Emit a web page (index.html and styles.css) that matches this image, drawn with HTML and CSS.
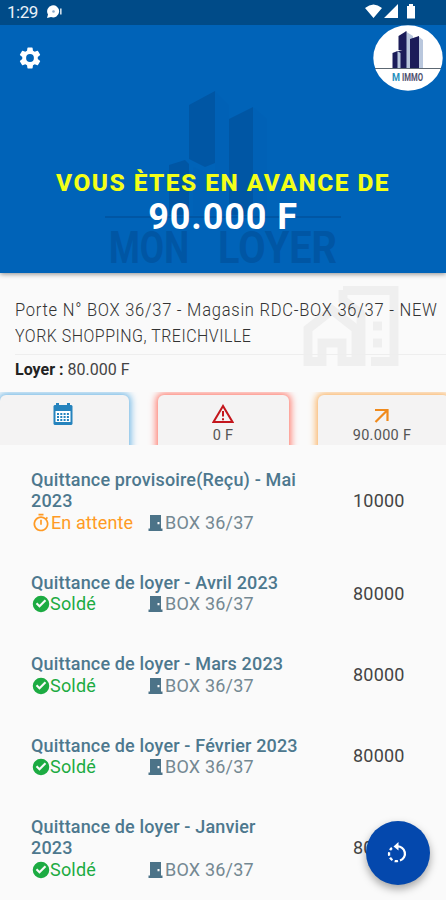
FILE: index.html
```html
<!DOCTYPE html>
<html lang="fr">
<head>
<meta charset="utf-8">
<title>Mon Loyer</title>
<link rel="stylesheet" href="styles.css">
</head>
<body>
<svg class="defs" width="0" height="0">
  <symbol id="check" viewBox="0 0 24 24"><path fill="currentColor" d="M12 1a11 11 0 1 0 0 22 11 11 0 0 0 0-22zm-2 16-5-5 2-2 3 3 7-7 2 2z"/></symbol>
  <symbol id="door" viewBox="0 0 15 16"><path fill="currentColor" fill-rule="evenodd" d="M2 0h11v13.500h1.500V16H.500v-2.500H2zM9.500 7v2.200h2V7z"/></symbol>
  <symbol id="timer" viewBox="0 0 24 24"><path fill="currentColor" d="M15 1H9v2h6zm-4 13h2V8h-2zm8-6.600 1.400-1.400-1.400-1.400L17.600 6A9 9 0 1 0 19 7.400zM12 20a7 7 0 1 1 0-14 7 7 0 0 1 0 14z"/></symbol>
</svg>
<div class="screen">
  <header class="hero">
    <div class="status">
      <span class="time">1:29</span>
      <svg class="notif" width="17" height="14" viewBox="0 0 17 14"><path d="M1 13 2 9.500A6 6 0 1 1 5 12zM14.200 3.500h1.300v6h-1.300z" fill="#fff"/><circle cx="7.500" cy="6.500" r="1.300" fill="#8faccb"/></svg>
      <svg class="signals" width="52" height="16" viewBox="0 0 52 16" fill="#fff"><path d="M0 4Q8.500-3 17 4L8.500 14zM33 0v14H19zM42 2h2V0h4v2h2v12.500h-8z"/></svg>
    </div>
    <svg class="gear" width="26" height="26" viewBox="0 0 24 24"><path fill="#fff" d="M19.140 12.940c.04-.3.060-.610.060-.940s-.020-.640-.070-.940l2.030-1.580a.49.49 0 0 0 .12-.610l-1.920-3.320a.49.49 0 0 0-.590-.220l-2.390.960a7 7 0 0 0-1.620-.940l-.360-2.540a.48.48 0 0 0-.480-.410h-3.840a.47.47 0 0 0-.470.410l-.360 2.540c-.590.240-1.130.570-1.620.940l-2.390-.960a.48.48 0 0 0-.590.220L2.740 8.870a.47.47 0 0 0 .12.610l2.030 1.580a6 6 0 0 0 0 1.880l-2.030 1.580a.49.49 0 0 0-.12.610l1.920 3.320c.12.220.37.290.590.220l2.390-.960c.5.380 1.030.700 1.620.940l.360 2.540c.050.240.240.410.480.410h3.840c.240 0 .440-.170.470-.410l.360-2.540a7 7 0 0 0 1.620-.940l2.390.960c.220.080.470 0 .590-.220l1.920-3.320a.47.47 0 0 0-.12-.610zM12 15.600a3.600 3.600 0 1 1 0-7.200 3.600 3.600 0 0 1 0 7.200z"/></svg>
    <svg class="logo" width="70" height="66" viewBox="0 0 70 66">
      <ellipse cx="35" cy="33" rx="34.700" ry="32.700" fill="#fff"/>
      <path d="M32 6l8 5v32h-8zM45 11l5 4v28h-5z" fill="#b9c7dd"/>
      <path d="M25.500 11l8-5v37h-4V26l-4-1zM37 14l9-3v32h-9zM19.500 28l5-2v17h-5zM24.500 26h5v17h-5z" fill="#1b1c59"/>
      <path d="M24.500 26l3 2v15h-3z" fill="#b9c7dd"/>
      <path d="M2 43.500h66" stroke="#5c6772"/>
      <text x="19" y="56" font-size="11.500" font-weight="700" textLength="8" lengthAdjust="spacingAndGlyphs" fill="#258fbd">M</text><text x="29" y="56" font-size="11.500" font-weight="700" textLength="21" lengthAdjust="spacingAndGlyphs" fill="#51516f">IMMO</text>
    </svg>
    <svg class="watermark" width="236" height="182" viewBox="0 0 236 182" fill="#0056a4">
      <path d="M84 14l26-14v72l-10 4-16-8zM124 28l24-12v108h-24zM64 74l16-5 4 4v51H64z"/>
      <path d="M88 76l22 9v39H88zM110 0l14 14v110h-14zM148 16l14 12v96h-14z" opacity=".1"/>
      <path d="M0 125h236v2H0z"/>
      <text x="4" y="172" font-size="45" font-weight="700" textLength="80" lengthAdjust="spacingAndGlyphs">MON</text>
      <text x="113" y="172" font-size="45" font-weight="700" textLength="119" lengthAdjust="spacingAndGlyphs">LOYER</text>
    </svg>
    <div class="lead">VOUS ÈTES EN AVANCE DE</div>
    <div class="sum">90.000 F</div>
  </header>

  <section class="info">
    <svg class="estate" width="96" height="80" viewBox="0 0 96 80" fill="none" stroke="#efefef" stroke-width="9">
      <path d="M40 4.500h51v71H68M40 4v10l18 14v52"/>
      <path d="M5 80V43l24-19 24 19v32.500H39V57H19v18.500H5"/>
      <path d="M70 40h9M70 57h9"/>
    </svg>
    <div class="address"><span class="l1">Porte N° BOX 36/37 - Magasin RDC-BOX 36/37 - NEW</span><span class="l2">YORK SHOPPING, TREICHVILLE</span></div>
    <div class="rent"><b>Loyer :</b> 80.000 F</div>
  </section>

  <nav class="tabs">
    <div class="tab blue">
      <svg width="20" height="22" viewBox="0 0 20 22"><path fill="#2583bd" d="M3 0h3v2h8V0h3v2h1.500l1 1v18l-1 1h-17l-1-1V3l1-1H3z"/><path fill="#fff" d="M2.500 8h15v11h-15z"/><path d="M4 11h12M4 14h12M4 17h12" stroke="#2583bd" stroke-width="1.800" stroke-dasharray="2 1.300"/></svg>
    </div>
    <div class="tab red">
      <svg width="22" height="20" viewBox="0 0 22 20"><path d="M11 2 1.500 18h19z" fill="none" stroke="#c4161c" stroke-width="2"/><path d="M11 7v5.500M11 14.200v2" stroke="#c4161c" stroke-width="2"/></svg>
      <span>0 F</span>
    </div>
    <div class="tab orange">
      <svg width="16" height="16" viewBox="0 0 16 16"><path d="M1 2h12.500v11M13 2.500 1.500 14" fill="none" stroke="#f08a1c" stroke-width="2.200"/></svg>
      <span>90.000 F</span>
    </div>
  </nav>

  <main class="list">
    <article class="item">
      <div><h2>Quittance provisoire(Reçu) - Mai<br>2023</h2>
      <div class="meta"><span class="state wait"><svg width="20" height="20"><use href="#timer"/></svg>En attente</span><span class="box"><svg width="15" height="16"><use href="#door"/></svg>BOX 36/37</span></div></div>
      <div class="amount">10000</div>
    </article>
    <article class="item">
      <div><h2>Quittance de loyer - Avril 2023</h2>
      <div class="meta"><span class="state"><svg width="18" height="18"><use href="#check"/></svg>Soldé</span><span class="box"><svg width="15" height="16"><use href="#door"/></svg>BOX 36/37</span></div></div>
      <div class="amount">80000</div>
    </article>
    <article class="item">
      <div><h2>Quittance de loyer - Mars 2023</h2>
      <div class="meta"><span class="state"><svg width="18" height="18"><use href="#check"/></svg>Soldé</span><span class="box"><svg width="15" height="16"><use href="#door"/></svg>BOX 36/37</span></div></div>
      <div class="amount">80000</div>
    </article>
    <article class="item">
      <div><h2>Quittance de loyer - Février 2023</h2>
      <div class="meta"><span class="state"><svg width="18" height="18"><use href="#check"/></svg>Soldé</span><span class="box"><svg width="15" height="16"><use href="#door"/></svg>BOX 36/37</span></div></div>
      <div class="amount">80000</div>
    </article>
    <article class="item">
      <div><h2>Quittance de loyer - Janvier<br>2023</h2>
      <div class="meta"><span class="state"><svg width="18" height="18"><use href="#check"/></svg>Soldé</span><span class="box"><svg width="15" height="16"><use href="#door"/></svg>BOX 36/37</span></div></div>
      <div class="amount">80000</div>
    </article>
  </main>
  <button class="fab" aria-label="Actualiser">
    <svg width="22" height="22" viewBox="0 0 22 22" fill="none" stroke="#fff" stroke-width="2.300"><path d="M10 4.500a7.200 7.200 0 0 1 3 14"/><path d="M11 19A7.300 7.300 0 0 1 5 6" stroke-dasharray="3.400 2.200"/><path d="M11.500 0v8.500L6.500 4.500z" fill="#fff" stroke="none"/></svg>
  </button>
</div>
</body>
</html>
```
FILE: styles.css
```css
* { box-sizing: border-box; }
body { margin: 0; font-family: Roboto, sans-serif; background: #fafafa; color: #333; }
svg { display: block; flex: none; }
.defs { position: absolute; }
.screen { position: relative; width: 446px; height: 900px; overflow: hidden; }

.hero { position: relative; height: 273px; background: #0063b8; box-shadow: 0 1px 5px rgba(0,0,0,.45); text-align: center; color: #fff; }
.status { display: flex; height: 25px; padding: 0 29px 0 7px; background: #004b88; }
.time { font-size: 17px; line-height: 25px; letter-spacing: -.5px; color: #e9f1f9; }
.notif { margin: 5px 0 0 8px; }
.signals { margin: 4px 0 0 auto; }
.gear { margin: 20px 0 0 17px; }
.logo { position: absolute; left: 373px; top: 25px; }
.watermark { position: absolute; left: 105px; top: 91px; }
.lead { position: relative; margin-top: 97px; font-size: 24.500px; line-height: 30px; font-weight: 800; letter-spacing: 1.450px; color: #f3ff18; white-space: nowrap; }
.sum { position: relative; margin-top: 1px; font-size: 36px; line-height: 36px; font-weight: 700; letter-spacing: .9px; }

.info { position: relative; height: 119px; padding: 24px 0 0 15px; }
.estate { position: absolute; left: 303px; top: 13px; }
.address { position: relative; height: 58px; border-bottom: 1px solid #eee; font-size: 19px; font-weight: 300; line-height: 26px; color: #333; }
.address span { display: block; width: max-content; white-space: nowrap; transform-origin: left; }
.l1 { transform: scaleX(.87); letter-spacing: .85px; }
.l2 { transform: scaleX(.84); letter-spacing: .6px; }
.rent { position: relative; margin-top: 5px; font-size: 16px; line-height: 20px; color: #444; }
.rent b { color: #222; }

.tabs { display: grid; grid-template-columns: 129px 131px 131px; column-gap: 29px; height: 53px; padding-top: 3px; overflow: hidden; }
.tab { display: flex; flex-direction: column; align-items: center; height: 70px; padding-top: 9px; border-radius: 6px; background: #f4f3f3; font-size: 14.500px; line-height: 18px; color: #555; letter-spacing: .3px; }
.tab span { margin-top: 3px; }
.blue { padding-right: 3px; padding-top: 8px; box-shadow: 0 0 7px 2px #72b8e6; }
.red { padding-right: 1px; box-shadow: 0 0 7px 2px #ff7d70; }
.orange { padding-right: 3px; box-shadow: 0 0 7px 2px #fbb465; }
.orange svg { margin: 4px 0 0; }

.list { padding: 24px 0 0 31px; }
.item { display: grid; grid-template-columns: 290px 116px; align-items: center; padding-bottom: 38px; }
h2 { margin: 0; font-size: 18px; line-height: 21.400px; font-weight: 500; letter-spacing: .16px; color: #4d788e; white-space: nowrap; }
.meta { display: grid; grid-template-columns: 117px auto; height: 22px; font-size: 18px; line-height: 22px; color: #748892; }
.meta span { display: flex; align-items: center; }
.state { color: #1cab42; padding-left: 1px; letter-spacing: .2px; }
.wait { color: #ff9a24; padding-left: 0; letter-spacing: .1px; }
.box { letter-spacing: .2px; }
.box svg { color: #4c7388; margin-right: 2px; }
.amount { font-size: 18px; line-height: 22px; padding-left: 32px; letter-spacing: .2px; color: #444; }
.fab { position: absolute; left: 366px; top: 821px; width: 64px; height: 64px; border: 0; border-radius: 50%; padding: 0; background: #0448ad; display: grid; place-items: center; box-shadow: 0 4px 8px rgba(0,0,0,.35); }
```
